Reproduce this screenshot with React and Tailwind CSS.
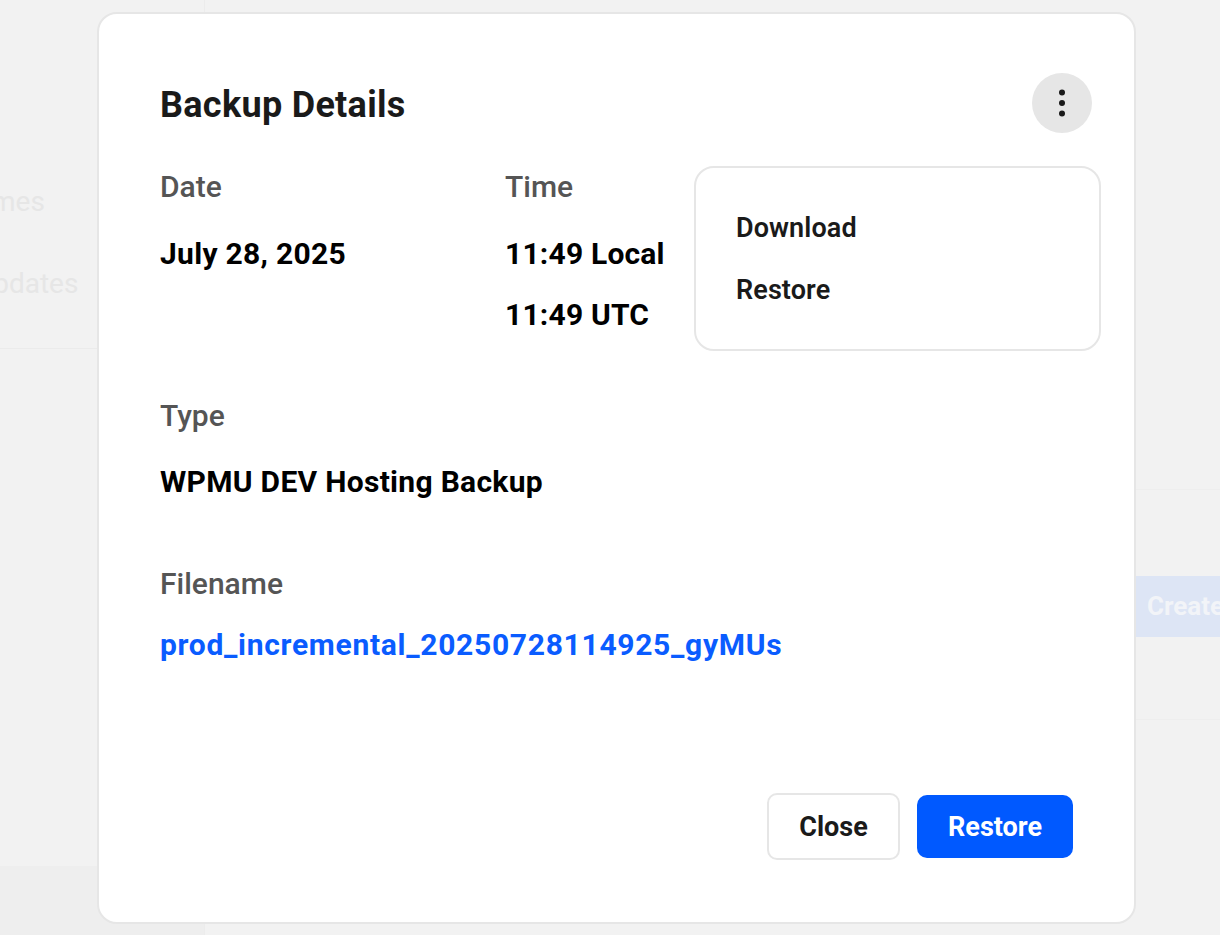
import React from "react";

function Dots() {
  return (
    <svg width="8" height="28" viewBox="0 0 8 28" aria-hidden="true">
      <circle cx="4" cy="3.5" r="3" fill="#1a1a1a" />
      <circle cx="4" cy="14" r="3" fill="#1a1a1a" />
      <circle cx="4" cy="24.5" r="3" fill="#1a1a1a" />
    </svg>
  );
}

export default function App() {
  return (
    <div
      className="relative w-[1220px] h-[935px] overflow-hidden bg-[#f2f2f2]"
      style={{ fontFamily: "Roboto, 'Liberation Sans', sans-serif" }}
    >
      {/* background page */}
      <div className="flex h-full">
        <aside className="w-[205px] shrink-0 border-r border-[#ececec] flex flex-col">
          <div className="pt-[186px] flex flex-col gap-[50px] text-[28px] leading-[32px] text-[#e6e6e6] whitespace-nowrap">
            <div className="-ml-[56px]">Themes</div>
            <div className="-ml-[25px]">Updates</div>
          </div>
          <div className="mt-[48px] border-b border-[#ebebeb]" />
          <div className="flex-1" />
          <div className="h-[69px] bg-[#eeeeee]" />
        </aside>
        <main className="flex-1 flex flex-col">
          <div className="h-[490px] border-b border-[#eeeeee]" />
          <div className="h-[86px]" />
          <div className="flex justify-end">
            <div className="h-[61px] w-[300px] bg-[#dde5f5] flex items-center justify-end text-[26px] font-bold text-[#f2f4f8]">
              <span className="w-[83px] overflow-hidden whitespace-nowrap pl-[10px]">Create</span>
            </div>
          </div>
          <div className="h-[83px] border-b border-[#eeeeee]" />
        </main>
      </div>

      {/* modal */}
      <div className="absolute left-[97px] top-[12px] w-[1039px] h-[912px] bg-white border-2 border-[#e6e6e6] rounded-[20px] flex flex-col">
        <div className="flex items-center justify-between pl-[61px] pr-[42px] pt-[59px]">
          <h2 className="pt-[3px] text-[36px] leading-[42px] font-bold tracking-[0.3px] text-[#1a1a1a]">Backup Details</h2>
          <button className="w-[60px] h-[60px] rounded-full bg-[#e6e6e6] flex items-center justify-center">
            <Dots />
          </button>
        </div>

        <div className="pl-[61px] pt-[38px] flex">
          <div className="w-[345px]">
            <div className="text-[30px] leading-[32px] font-medium text-[#555555]">Date</div>
            <div className="mt-[35px] text-[30px] leading-[32px] font-bold tracking-[0.3px] text-black">July 28, 2025</div>
          </div>
          <div>
            <div className="text-[30px] leading-[32px] font-medium text-[#555555]">Time</div>
            <div className="mt-[35px] text-[30px] leading-[32px] font-bold tracking-[0.2px] text-black">11:49 Local</div>
            <div className="mt-[29px] text-[30px] leading-[32px] font-bold tracking-[0.2px] text-black">11:49 UTC</div>
          </div>
        </div>

        <div className="pl-[61px] pt-[69px]">
          <div className="text-[30px] leading-[32px] font-medium text-[#555555]">Type</div>
          <div className="mt-[34px] text-[30px] leading-[32px] font-bold tracking-[0.3px] text-black">WPMU DEV Hosting Backup</div>
        </div>

        <div className="pl-[61px] pt-[70px]">
          <div className="text-[30px] leading-[32px] font-medium text-[#555555]">Filename</div>
          <div className="mt-[29px] text-[30px] leading-[32px] font-bold text-[#0a5cff] tracking-[0.7px]">prod_incremental_20250728114925_gyMUs</div>
        </div>

        <div className="mt-auto flex justify-end items-center gap-[17px] pr-[61px] pb-[62px]">
          <button className="h-[67px] w-[133px] rounded-[10px] border-2 border-[#e6e6e6] bg-white pt-[2px] text-[27px] font-bold text-[#1a1a1a]">
            Close
          </button>
          <button className="h-[63px] w-[156px] rounded-[10px] bg-[#0059ff] pt-[2px] text-[27px] font-bold text-white">
            Restore
          </button>
        </div>

        {/* dropdown menu */}
        <div className="absolute top-[152px] right-[33px] w-[407px] bg-white border-2 border-[#e6e6e6] rounded-[20px] pl-[40px] pt-[44px] pb-[43px] flex flex-col gap-[30px]">
          <div className="text-[27px] leading-[32px] font-semibold tracking-[0.1px] text-[#1a1a1a]">Download</div>
          <div className="text-[27px] leading-[32px] font-semibold tracking-[0.1px] text-[#1a1a1a]">Restore</div>
        </div>
      </div>
    </div>
  );
}
